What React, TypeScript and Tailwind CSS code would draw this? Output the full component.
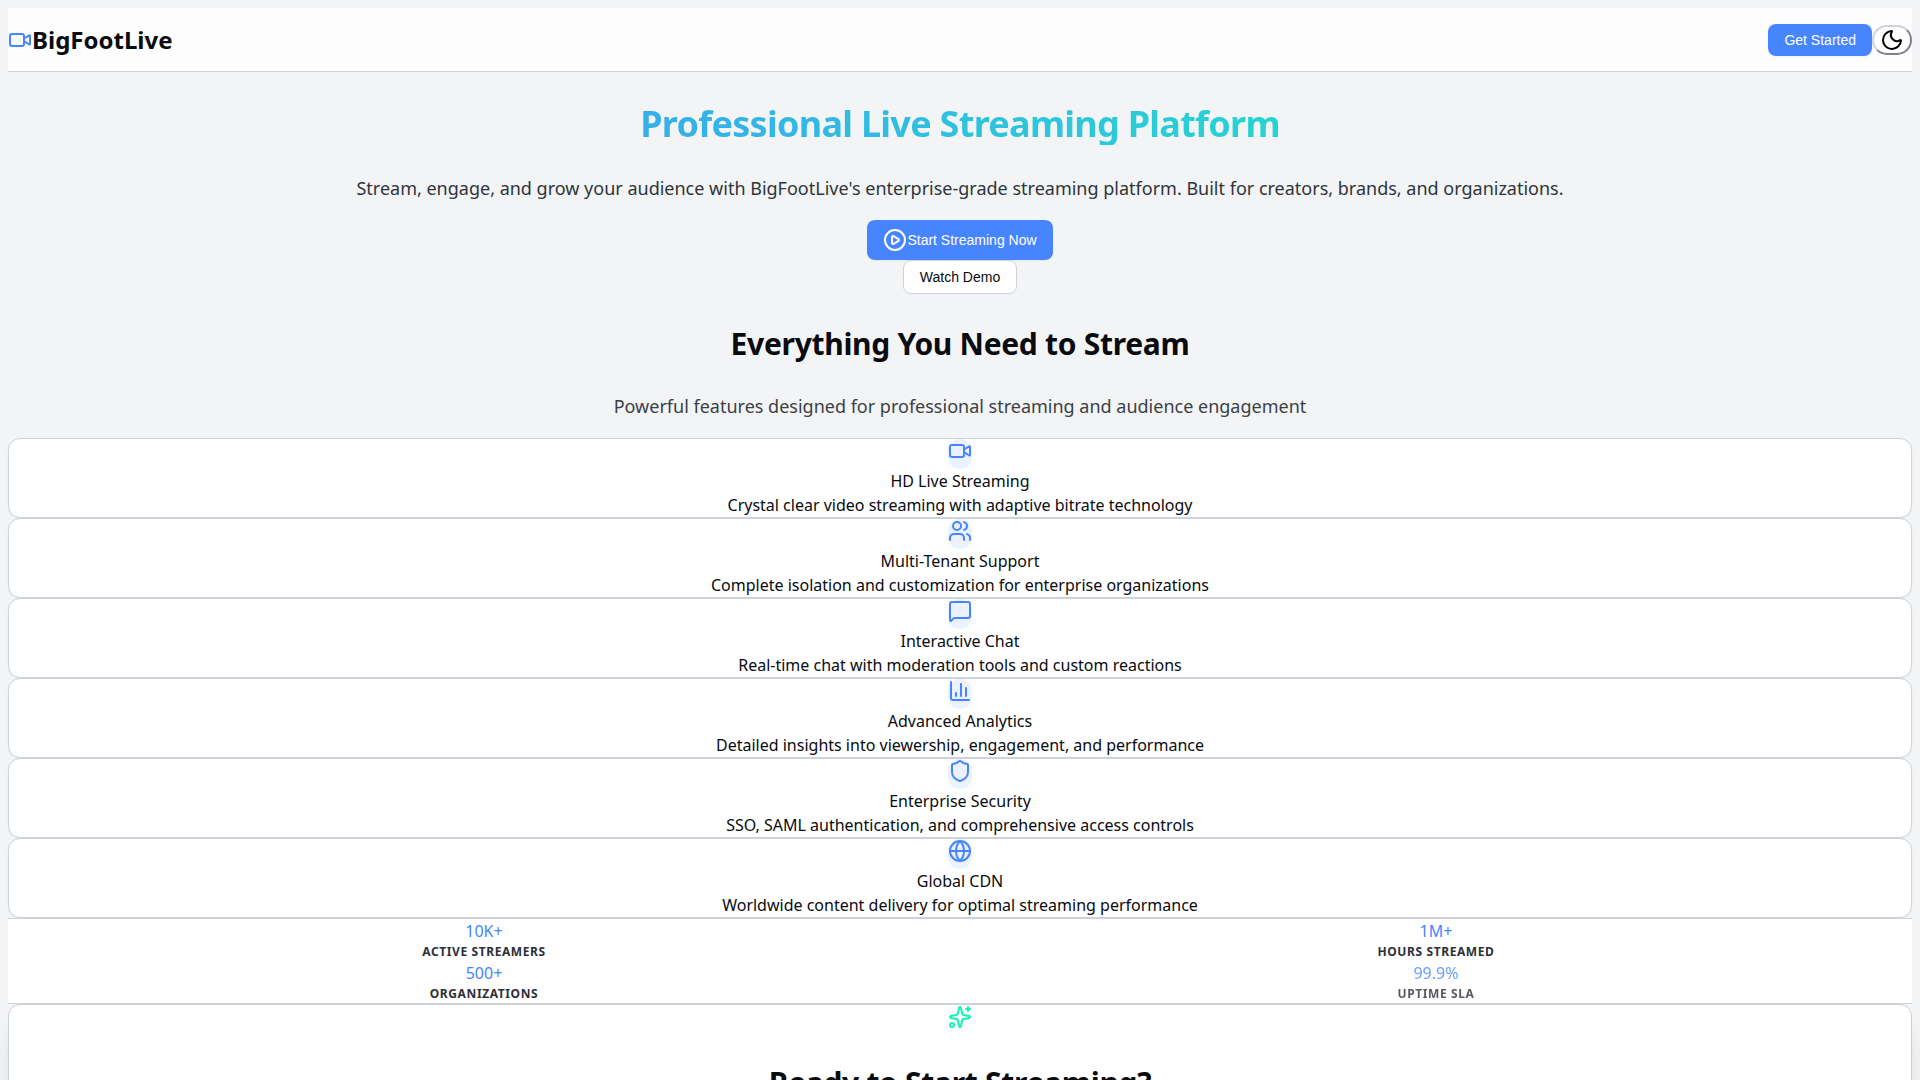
import React from "react";
import {
  ChartColumn,
  CirclePlay,
  Globe,
  MessageSquare,
  Moon,
  Shield,
  Sparkles,
  Users,
  Video,
  type LucideIcon,
} from "lucide-react";

type Feature = { icon: LucideIcon; title: string; text: string };

const features: Feature[] = [
  { icon: Video, title: "HD Live Streaming", text: "Crystal clear video streaming with adaptive bitrate technology" },
  { icon: Users, title: "Multi-Tenant Support", text: "Complete isolation and customization for enterprise organizations" },
  { icon: MessageSquare, title: "Interactive Chat", text: "Real-time chat with moderation tools and custom reactions" },
  { icon: ChartColumn, title: "Advanced Analytics", text: "Detailed insights into viewership, engagement, and performance" },
  { icon: Shield, title: "Enterprise Security", text: "SSO, SAML authentication, and comprehensive access controls" },
  { icon: Globe, title: "Global CDN", text: "Worldwide content delivery for optimal streaming performance" },
];

const stats = [
  { value: "10K+", label: "Active Streamers", faded: false },
  { value: "1M+", label: "Hours Streamed", faded: false },
  { value: "500+", label: "Organizations", faded: false },
  { value: "99.9%", label: "Uptime SLA", faded: true },
];

function Header() {
  return (
    <header className="flex h-16 items-center justify-between border-b border-[#cdd2d7] bg-[#fdfdfd]">
      <div className="flex items-center">
        <Video className="size-6 text-[#4785ff]" />
        <span className="text-2xl font-bold">BigFootLive</span>
      </div>
      <div className="flex items-center">
        <button
          type="button"
          className="h-8 rounded-lg bg-[#4785ff] px-4 font-['Liberation_Sans',sans-serif] text-sm text-white shadow-xs"
        >
          Get Started
        </button>
        <button
          type="button"
          aria-label="Toggle theme"
          className="rounded-full border-2 border-[#cdd2dc] bg-white px-1.5 py-px text-black [border-style:outset]"
        >
          <Moon className="size-6" />
        </button>
      </div>
    </header>
  );
}

function Hero() {
  return (
    <section className="pt-[31px]">
      <h1 className="bg-linear-to-r from-[#4785ff] to-[#0ff5b2] bg-clip-text text-4xl leading-[42px] font-bold tracking-[-0.02em] text-transparent">
        Professional Live Streaming Platform
      </h1>
      <p className="mt-[29px] text-lg text-[#30343b]">
        Stream, engage, and grow your audience with BigFootLive's enterprise-grade streaming platform. Built for
        creators, brands, and organizations.
      </p>
      <div className="mt-[18px] flex flex-col items-center font-['Liberation_Sans',sans-serif] text-sm">
        <button type="button" className="flex h-10 items-center rounded-lg bg-[#4785ff] px-4 text-white shadow-xs">
          <CirclePlay className="size-6" />
          Start Streaming Now
        </button>
        <button type="button" className="rounded-lg border border-[#cdd2dc] bg-white px-4 py-1.5">
          Watch Demo
        </button>
      </div>
    </section>
  );
}

function Features() {
  return (
    <section className="pt-8">
      <h2 className="text-3xl leading-9 font-bold tracking-[-0.01em]">Everything You Need to Stream</h2>
      <p className="mt-[30px] text-lg text-[#3c4047]">
        Powerful features designed for professional streaming and audience engagement
      </p>
      <div className="mt-[18px]">
        {features.map(({ icon: Icon, title, text }) => (
          <article key={title} className="rounded-xl border border-[#cdd2dc] bg-white shadow-xs">
            <div className="mx-auto h-[30px] w-6 rounded-full bg-[#ebf1ff] text-[#4785ff]">
              <Icon className="size-6" />
            </div>
            <h3>{title}</h3>
            <p>{text}</p>
          </article>
        ))}
      </div>
    </section>
  );
}

function Stats() {
  return (
    <section className="grid grid-cols-2 border-y border-[#cdd2d7] bg-white">
      {stats.map(({ value, label, faded }) => (
        <div key={label} className={faded ? "opacity-80" : ""}>
          <div className="text-[#4785ff]">{value}</div>
          <div className="text-xs leading-[18px] font-bold tracking-wider text-[#2c3038] uppercase">{label}</div>
        </div>
      ))}
    </section>
  );
}

function CallToAction() {
  return (
    <section className="rounded-xl border border-[#cdd2d7] bg-white pb-8 shadow-xl">
      <Sparkles className="mx-auto size-6 text-[#0ff5b2]" />
      <h2 className="mt-9 text-3xl leading-9 font-bold tracking-[-0.01em]">Ready to Start Streaming?</h2>
    </section>
  );
}

export default function App() {
  return (
    <div className="min-h-screen bg-[#f2f4f6] p-2 font-['Noto_Sans',sans-serif] text-base text-[#090b0f]">
      <Header />
      <main className="text-center">
        <Hero />
        <Features />
        <Stats />
        <CallToAction />
      </main>
    </div>
  );
}
